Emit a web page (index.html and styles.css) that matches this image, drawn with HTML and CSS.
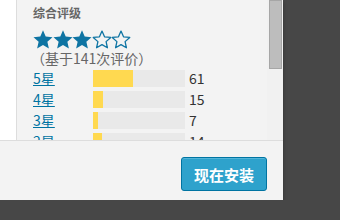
FILE: index.html
```html
<!DOCTYPE html>
<html>
<head>
    <meta charset="utf-8">
	<title>插件详情</title>
	<link rel="stylesheet" href="styles.css">
</head>
<body>
	<div class="modal">
		<div class="modal-body">
			<div class="main"></div>
			<div class="sidebar">
				<h3>综合评级</h3>
				<div class="stars">
					<svg viewBox="0 0 20 20"><polygon class="full" points="10,0.3 12.7,6.58 19.51,7.21 14.37,11.72 15.88,18.39 10,14.9 4.12,18.39 5.63,11.72 0.49,7.21 7.3,6.58"/></svg>
					<svg viewBox="0 0 20 20"><polygon class="full" points="10,0.3 12.7,6.58 19.51,7.21 14.37,11.72 15.88,18.39 10,14.9 4.12,18.39 5.63,11.72 0.49,7.21 7.3,6.58"/></svg>
					<svg viewBox="0 0 20 20"><polygon class="full" points="10,0.3 12.7,6.58 19.51,7.21 14.37,11.72 15.88,18.39 10,14.9 4.12,18.39 5.63,11.72 0.49,7.21 7.3,6.58"/></svg>
					<svg viewBox="0 0 20 20"><polygon class="empty" points="10,1.1 12.53,6.82 18.75,7.46 14.09,11.63 15.41,17.74 10,14.6 4.59,17.74 5.91,11.63 1.25,7.46 7.47,6.82"/></svg>
					<svg viewBox="0 0 20 20"><polygon class="empty" points="10,1.1 12.53,6.82 18.75,7.46 14.09,11.63 15.41,17.74 10,14.6 4.59,17.74 5.91,11.63 1.25,7.46 7.47,6.82"/></svg>
				</div>
				<p class="num-ratings">（基于141次评价）</p>
				<div class="counter">
					<a href="#">5星</a>
					<span class="bar"><span class="fill" style="width: 43%"></span></span>
					<span class="count">61</span>
				</div>
				<div class="counter">
					<a href="#">4星</a>
					<span class="bar"><span class="fill" style="width: 11%"></span></span>
					<span class="count">15</span>
				</div>
				<div class="counter">
					<a href="#">3星</a>
					<span class="bar"><span class="fill" style="width: 5%"></span></span>
					<span class="count">7</span>
				</div>
				<div class="counter">
					<a href="#">2星</a>
					<span class="bar"><span class="fill" style="width: 10%"></span></span>
					<span class="count">14</span>
				</div>
			</div>
			<div class="scrollbar"><div class="thumb"></div></div>
		</div>
		<div class="modal-footer">
			<button type="button">现在安装</button>
		</div>
	</div>
</body>
</html>
```

FILE: styles.css
```css
body {
	margin: 0;
	background-color: #474747;
	font-family: "Noto Sans CJK SC", "Liberation Sans", sans-serif;
	color: #333;
}

.modal {
	width: 283px;
	height: 200px;
	display: flex;
	flex-direction: column;
	background-color: #f3f3f3;
	box-shadow: 0 2px 4px rgba(0, 0, 0, 0.3);
}

.modal-body {
	height: 140px;
	display: flex;
	overflow: hidden;
}

.main {
	width: 16px;
	background-color: #fff;
	border-right: 1px solid #dddddd;
}

.sidebar {
	flex: 1;
	padding: 0 0 0 16px;
}

.sidebar h3 {
	margin: 4px 0 0;
	font-size: 12px;
	line-height: 18px;
	font-weight: bold;
	color: #666;
}

.stars {
	display: flex;
	margin-top: 8px;
	height: 20px;
}

.stars svg {
	width: 20px;
	height: 20px;
	margin-right: -0.5px;
}

.stars .full {
	fill: #0e74a3;
}

.stars .empty {
	fill: none;
	stroke: #0e74a3;
	stroke-width: 1.3;
	stroke-linejoin: round;
}

.num-ratings {
	margin: 0 0 0 -2px;
	font-size: 14px;
	line-height: 16px;
	color: #666;
}

.counter {
	display: flex;
	align-items: center;
	height: 17px;
	margin-top: 4px;
}

.counter:first-of-type {
	margin-top: 5px;
}

.counter a {
	width: 60px;
	font-size: 14px;
	line-height: 17px;
	color: #0074a2;
	text-decoration: underline;
}

.bar {
	display: block;
	width: 92px;
	height: 17px;
	background-color: #e9e9e9;
}

.fill {
	display: block;
	height: 100%;
	background-color: #ffd950;
}

.count {
	margin-left: 4px;
	font-size: 14px;
	line-height: 17px;
}

.scrollbar {
	width: 16px;
	background-color: #f1f1f1;
	display: flex;
	justify-content: center;
}

.thumb {
	width: 11px;
	height: 67px;
	background-color: #bdbdbd;
	border: 1px solid #a6a6a6;
}

.modal-footer {
	flex: 1;
	border-top: 1px solid #dddddd;
	display: flex;
	justify-content: flex-end;
	align-items: flex-start;
	padding: 16px 16px 0 0;
}

.modal-footer button {
	width: 86px;
	height: 34px;
	background-color: #2ea2cc;
	border: 1px solid #0074a2;
	border-radius: 3px;
	box-shadow: inset 0 1px 0 rgba(120, 200, 230, 0.5);
	color: #fff;
	font-family: "Noto Sans CJK SC", sans-serif;
	font-size: 15px;
	font-weight: bold;
	cursor: pointer;
}
```
